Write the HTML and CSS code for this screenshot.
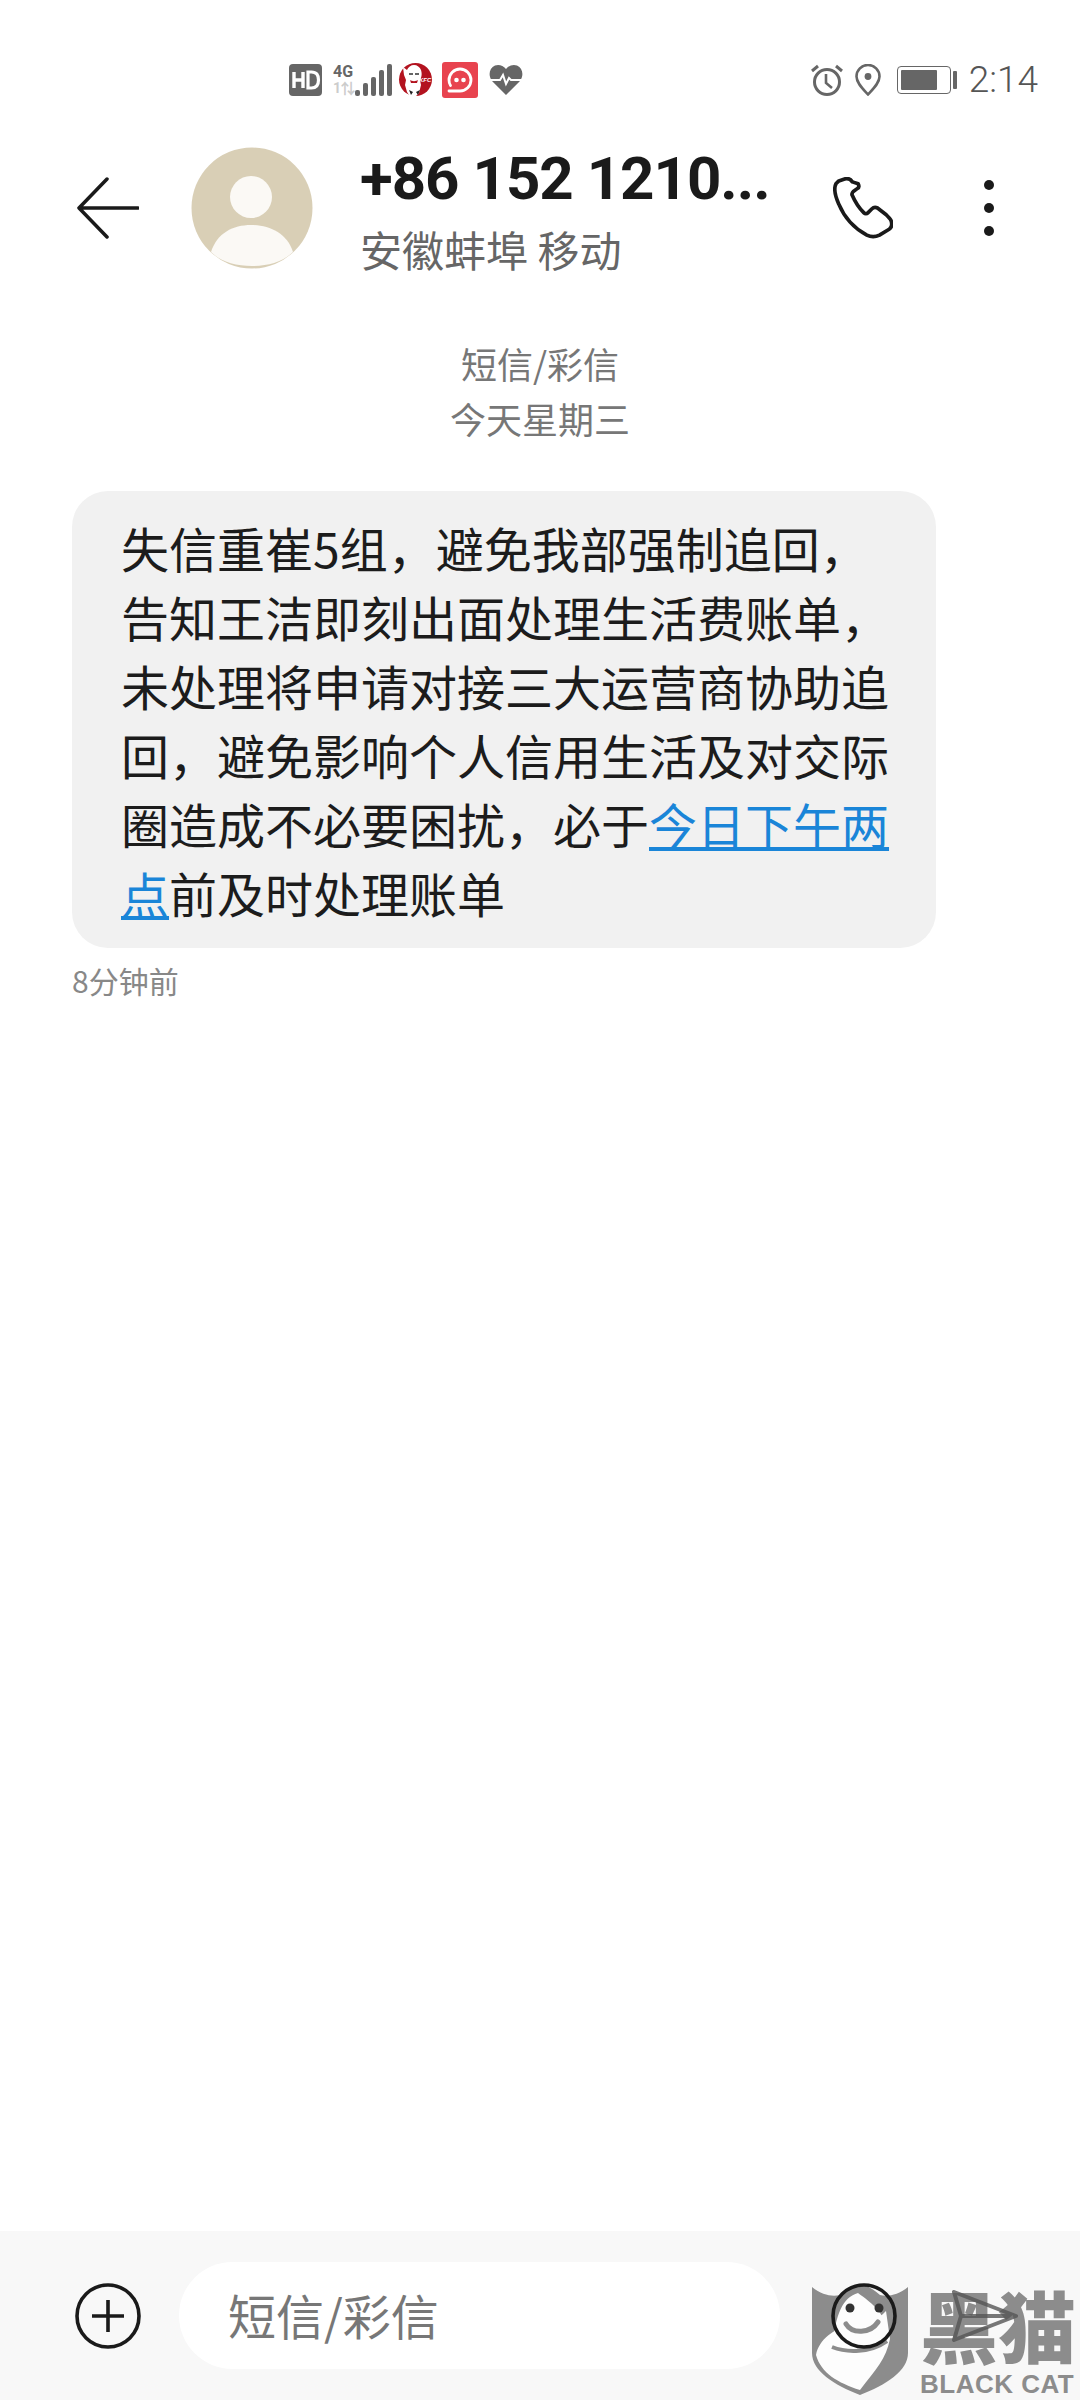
FILE: index.html
```html
<!DOCTYPE html>
<html lang="zh-CN">
<head>
    <meta charset="UTF-8">
    <meta name="viewport" content="width=device-width, initial-scale=1.0">
    <title>短信</title>
    <link rel="stylesheet" href="styles.css">
</head>
<body>

<div class="page">
    <div class="status-bar">
        <div class="status-left">
            <svg class="icon-hd" width="33" height="32" viewBox="0 0 33 32">
                <rect width="33" height="32" rx="4" fill="#666"/>
                <path d="M5 8v16M14 8v16M5 16h9" stroke="#fff" stroke-width="3.4" fill="none"/>
                <path d="M19 8v16h3.5c5 0 7-3 7-8s-2-8-7-8z" stroke="#fff" stroke-width="3.2" fill="none"/>
            </svg>
            <div class="signal">
                <div class="net">
                    <span class="net-type">4G</span>
                    <span class="net-sub">1⇅</span>
                </div>
                <div class="bars">
                    <i class="bar bar1"></i><i class="bar bar2"></i><i class="bar bar3"></i><i class="bar bar4"></i><i class="bar bar5"></i>
                </div>
            </div>
            <svg class="icon-kfc" width="35" height="33" viewBox="0 0 35 33">
                <circle cx="17.5" cy="16.5" r="16.5" fill="#b3131f"/>
                <path d="M5 4l4 3c1-3 4-5 7-5s6 2 7 5c1 3 1 7-1 10l1 5-2 8-5 5h-3l-4-6-2-7 1-5-2-5z" fill="#fff"/>
                <path d="M11 11h4M17 11h4" stroke="#333" stroke-width="1.6"/>
                <path d="M12 17c2 1.500 6 1.500 8 0l-1 3h-6z" fill="#b3131f"/>
                <path d="M11 27l4 2-2 3zM22 27l-4 2 2 3z" fill="#222"/>
                <text class="kfc-label" x="21" y="19">KFC</text>
            </svg>
            <svg class="icon-app" width="36" height="36" viewBox="0 0 36 36">
                <rect width="36" height="36" rx="3" fill="#e8434f"/>
                <path d="M7 29h11c6 0 11-5 11-11S24 7 18 7 7 12 7 18c0 2 .5 4 1.5 5.5" stroke="#fff" stroke-width="2.8" fill="none" stroke-linecap="round"/>
                <circle cx="14.5" cy="18" r="2.3" fill="#fff"/>
                <circle cx="21.5" cy="18" r="2.3" fill="#fff"/>
            </svg>
            <svg class="icon-heart" width="34" height="31" viewBox="0 0 34 31">
                <path d="M17 31L3 17C-1 12 0 4 6 1.500c4-1.500 8 0 11 3.500 3-3.500 7-5 11-3.500 6 2.500 7 10.500 3 15.500z" fill="#666"/>
                <path d="M0 16h11l3-5 3 9 3-6 2 2h12" stroke="#fff" stroke-width="2" fill="none"/>
            </svg>
        </div>
        <div class="status-right">
            <svg class="icon-alarm" width="32" height="32" viewBox="0 0 32 32">
                <circle cx="16" cy="18" r="12.500" stroke="#666" stroke-width="3" fill="none"/>
                <path d="M15 10v9l6 5" stroke="#666" stroke-width="2.600" fill="none"/>
                <path d="M1 7l6-5M31 7l-6-5" stroke="#666" stroke-width="3" fill="none"/>
            </svg>
            <svg class="icon-pin" width="26" height="32" viewBox="0 0 26 32">
                <path d="M13 30.500C8 25 1.500 19 1.500 12.500a11.500 11.500 0 0 1 23 0C24.500 19 18 25 13 30.500z" stroke="#666" stroke-width="2.600" fill="none"/>
                <circle cx="13" cy="12.500" r="3.400" fill="#666"/>
            </svg>
            <div class="battery">
                <div class="battery-body"><div class="battery-fill"></div></div>
                <div class="battery-cap"></div>
            </div>
            <span class="clock">2:14</span>
        </div>
    </div>

    <div class="header">
        <svg class="icon-back" width="62" height="62" viewBox="0 0 62 62">
            <path d="M61 31H3M30 2L2 31l28 29" stroke="#1a1a1a" stroke-width="3.500" fill="none" stroke-linecap="round" stroke-linejoin="round"/>
        </svg>
        <svg class="avatar" width="122" height="122" viewBox="0 0 122 122">
            <circle cx="61" cy="61" r="60.500" fill="#d9cfb6"/>
            <circle cx="60" cy="50" r="21" fill="#fbf9f5"/>
            <path d="M20 105c6-19 22-27 40-27s36 8 42 27c-10 10-25 14-41 14s-31-4-41-14z" fill="#fbf9f5"/>
        </svg>
        <div class="contact">
            <div class="contact-name">+86 152 1210...</div>
            <div class="contact-place">安徽蚌埠 移动</div>
        </div>
        <svg class="icon-phone" width="60" height="62" viewBox="0 0 62 62">
            <path d="M3 6C1 10 2 18 6 27c5 12 14 24 29 32 4 2 9 2 13 0l10-6c3-2 3-6 2-9-1-2-3-4-5-6l-9-7c-2-1-4-1-6 1l-4 4c-1 1-3 1-4 0-5-5-9-11-12-18-1-1 0-3 1-4l4-3c2-1 2-3 1-5L20 4c-2-3-5-4-8-3L6 3C5 4 4 5 3 6z" stroke="#1a1a1a" stroke-width="3.800" fill="none" stroke-linejoin="round"/>
        </svg>
        <div class="icon-more">
            <i class="dot"></i><i class="dot"></i><i class="dot"></i>
        </div>
    </div>

    <div class="messages">
        <div class="notice">
            <div>短信/彩信</div>
            <div>今天星期三</div>
        </div>
        <div class="bubble">
            <div>失信重崔5组，避免我部强制追回，</div>
            <div>告知王洁即刻出面处理生活费账单，</div>
            <div>未处理将申请对接三大运营商协助追</div>
            <div>回，避免影响个人信用生活及对交际</div>
            <div>圈造成不必要困扰，必于<a class="link">今日下午两</a></div>
            <div><a class="link">点</a>前及时处理账单</div>
        </div>
        <div class="msg-time">8分钟前</div>
    </div>

    <div class="footer">
        <div class="watermark">
            <svg class="wm-shield" width="98" height="110" viewBox="0 0 98 110">
                <path d="M1 2c10 8 20 10 28 8C36 4 42 0 49 0s13 4 20 10c8 2 18 0 28-8v66c0 18-22 32-48 42C23 100 1 86 1 68z" fill="#8c8c8c"/>
                <path d="M5 70c3-16 18-26 34-30 14-3 28-4 36-14l4 28c-4 20-14 30-30 51C27 98 10 88 5 70z" fill="#fdfdfd"/>
                <path d="M22 60C24 30 32 12 47 8c8 6 24 16 29 34-2 10-14 20-27 20-10 0-20-2-27-2z" fill="#fdfdfd"/>
                <path d="M35 39c6 10 24 10 32-2" stroke="#8c8c8c" stroke-width="5" fill="none" stroke-linecap="round"/>
                <circle cx="39" cy="23" r="4.500" fill="#333"/>
                <circle cx="68" cy="23" r="4.500" fill="#333"/>
                <path d="M21 62c15 6 38 6 55-6" stroke="#8c8c8c" stroke-width="4" fill="none"/>
            </svg>
            <div class="wm-text">
                <div class="wm-cn">黑猫</div>
                <div class="wm-en">BLACK CAT</div>
            </div>
        </div>
        <svg class="icon-add" width="66" height="66" viewBox="0 0 66 66">
            <circle cx="33" cy="33" r="31" stroke="#1a1a1a" stroke-width="3.600" fill="none"/>
            <path d="M17 33h32M33 17v32" stroke="#1a1a1a" stroke-width="3.600"/>
        </svg>
        <div class="input">短信/彩信</div>
        <svg class="icon-emoji" width="66" height="66" viewBox="0 0 66 66">
            <circle cx="33" cy="33" r="31" stroke="#1a1a1a" stroke-width="3.600" fill="none"/>
        </svg>
        <svg class="icon-send" width="66" height="52" viewBox="0 0 66 52">
            <path d="M2 2l62 24L2 50l7-24zM9 26h55" stroke="#555" stroke-opacity=".8" stroke-width="4" fill="none" stroke-linejoin="round"/>
        </svg>
    </div>
</div>

</body>
</html>
```

FILE: styles.css
```css
* {
    box-sizing: border-box;
}

body {
    margin: 0;
    background-color: #fff;
    font-family: "Noto Sans CJK SC", Roboto, sans-serif;
    color: #1a1a1a;
}

.page {
    display: flex;
    flex-direction: column;
    height: 2400px;
    overflow: hidden;
}

/* status bar */
.status-bar {
    display: flex;
    justify-content: space-between;
    align-items: center;
    height: 130px;
    padding: 29px 42px 0 289px;
    flex-shrink: 0;
    color: #666;
}

.status-left,
.status-right {
    display: flex;
    align-items: center;
}

.signal {
    display: flex;
    align-items: flex-end;
    margin-left: 11px;
    height: 32px;
}

.net {
    display: flex;
    flex-direction: column;
    width: 21px;
    font-family: Roboto, sans-serif;
    font-weight: 700;
    line-height: 16px;
}

.net-type {
    font-size: 16px;
    color: #666;
}

.net-sub {
    font-size: 14px;
    color: #ccc;
}

.bars {
    display: flex;
    align-items: flex-end;
    gap: 3px;
    margin-left: 1px;
}

.bar {
    display: block;
    width: 5px;
    border-radius: 2px;
    background-color: #666;
}

.bar1 { height: 6px; }
.bar2 { height: 13px; }
.bar3 { height: 19px; }
.bar4 { height: 26px; }
.bar5 { height: 32px; }

.icon-kfc { margin-left: 6px; }
.icon-app { margin-left: 9px; }
.icon-heart { margin-left: 11px; }
.icon-pin { margin-left: 12px; }

.kfc-label {
    font-family: "Liberation Sans", sans-serif;
    font-size: 6px;
    font-weight: 700;
    font-style: italic;
    fill: #fff;
}

.battery {
    display: flex;
    align-items: center;
    margin-left: 16px;
    gap: 2px;
}

.battery-body {
    width: 54px;
    height: 28px;
    padding: 3px;
    border: 1.5px solid #666;
    border-radius: 4px;
}

.battery-fill {
    width: 36px;
    height: 100%;
    border-radius: 1px;
    background-color: #666;
}

.battery-cap {
    width: 4px;
    height: 18px;
    border-radius: 1px;
    background-color: #666;
}

.clock {
    margin-left: 12px;
    font-family: Roboto, sans-serif;
    font-size: 37px;
    font-weight: 300;
    line-height: 36px;
    color: #555;
}

/* header */
.header {
    display: flex;
    align-items: center;
    height: 155px;
    padding-left: 77px;
    flex-shrink: 0;
}

.avatar {
    margin-left: 52px;
    flex-shrink: 0;
}

.contact {
    width: 473px;
    margin-left: 47px;
    padding-top: 3px;
}

.contact-name {
    font-family: Roboto, sans-serif;
    font-size: 60px;
    font-weight: 700;
    line-height: 70px;
    letter-spacing: -1px;
    white-space: nowrap;
    color: #1a1a1a;
}

.contact-place {
    margin-top: 10px;
    font-size: 42px;
    line-height: 50px;
    color: #666;
}

.icon-more {
    display: flex;
    flex-direction: column;
    gap: 13px;
    margin-left: 91px;
}

.dot {
    display: block;
    width: 10px;
    height: 10px;
    border-radius: 50%;
    background-color: #1a1a1a;
}

/* messages */
.messages {
    flex: 1;
    padding: 51px 0 0 72px;
}

.notice {
    margin-left: -72px;
    text-align: center;
    font-size: 36px;
    line-height: 55px;
    color: #777;
}

.bubble {
    width: 864px;
    margin-top: 45px;
    padding: 22px 0 21px 49px;
    border-radius: 36px;
    background-color: #f1f1f1;
    font-size: 48px;
    line-height: 69px;
    white-space: nowrap;
    color: #1c1c1c;
}

.link {
    color: #1a85d8;
    text-decoration: underline;
}

.msg-time {
    margin-top: 12px;
    font-size: 30px;
    line-height: 40px;
    color: #888;
}

/* bottom bar */
.footer {
    position: relative;
    display: flex;
    align-items: center;
    height: 169px;
    padding: 0 0 0 75px;
    flex-shrink: 0;
    background-color: #f8f8f8;
}

.input {
    width: 601px;
    height: 107px;
    margin-left: 38px;
    padding-left: 49px;
    border-radius: 54px;
    background-color: #fff;
    font-size: 48px;
    line-height: 104px;
    color: #777;
}

.icon-add {
    flex-shrink: 0;
}

.icon-emoji {
    position: relative;
    margin-left: 51px;
    flex-shrink: 0;
}

.icon-send {
    position: relative;
    margin-left: 55px;
    flex-shrink: 0;
}

/* black cat watermark, sits over the corner of the screenshot */
.watermark {
    position: absolute;
    right: 0;
    bottom: 0;
    display: flex;
    align-items: flex-start;
    gap: 11px;
    color: #8c8c8c;
}

.wm-shield {
    margin-bottom: 5px;
}

.wm-text {
    width: 160px;
}

.wm-cn {
    font-size: 78px;
    font-weight: 900;
    line-height: 78px;
    white-space: nowrap;
}

.wm-en {
    margin-top: 6px;
    font-family: "Liberation Sans", sans-serif;
    font-size: 26px;
    font-weight: 700;
    line-height: 30px;
    letter-spacing: 0.5px;
    white-space: nowrap;
}
```
